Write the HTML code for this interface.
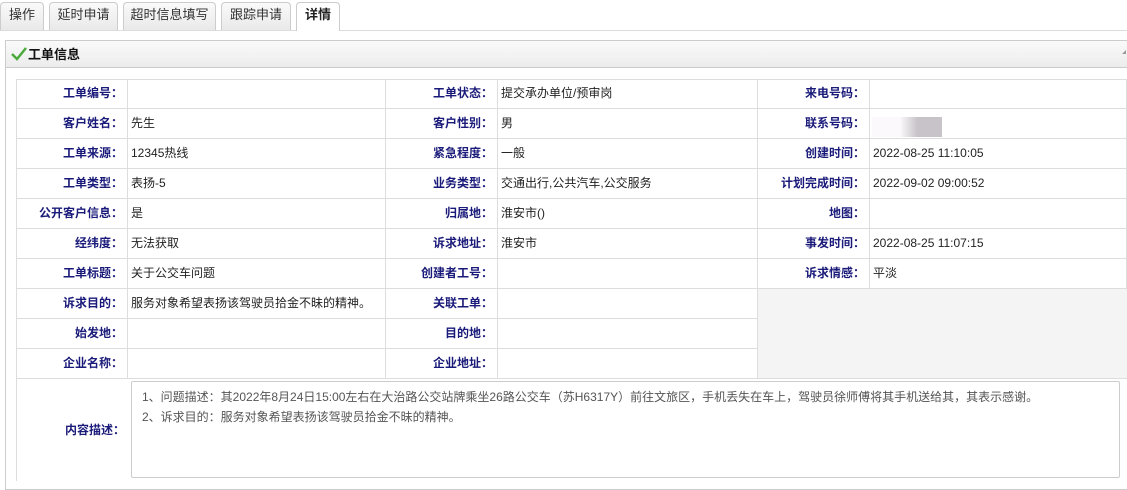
<!DOCTYPE html>
<html><head><meta charset="utf-8"><style>
*{margin:0;padding:0;box-sizing:border-box}
body{width:1127px;height:481px;overflow:hidden;background:#fff;font-family:"Liberation Sans","Noto Sans CJK SC",sans-serif;font-size:12px;color:#222;position:relative}
.tab{position:absolute;top:2px;height:28px;border:1px solid #ccc;border-bottom:none;border-radius:4px 4px 0 0;background:linear-gradient(#fafafa,#e9e9e9);text-align:center;line-height:24px;font-size:13px;color:#333}
.tab.a{background:#fff;height:29px;font-weight:bold;color:#222}
.tabline{position:absolute;left:0;top:30px;width:1127px;border-top:1px solid #ddd}
.panel{position:absolute;left:5px;top:40px;width:1130px;height:450px;border:1px solid #ccc}
.hdr{position:absolute;left:0;top:0;width:100%;height:27px;background:linear-gradient(#fafafa,#ececec);border-bottom:1px solid #ccc;font-weight:bold;font-size:13px;line-height:27px;padding-left:22px;color:#111}
.c{position:absolute;border-right:1px solid #ddd;border-bottom:1px solid #ddd;height:30px;line-height:29px;white-space:nowrap}
.l{text-align:right;color:#1a1a7a;font-weight:bold;padding-right:4px}
.v{padding-left:3px;color:#222}
</style></head><body>
<div class="tab" style="left:0;width:44px">操作</div>
<div class="tab" style="left:49px;width:69px">延时申请</div>
<div class="tab" style="left:123px;width:93px">超时信息填写</div>
<div class="tab" style="left:221px;width:70px">跟踪申请</div>
<div class="tabline"></div>
<div class="tab a" style="left:296px;width:44px">详情</div>
<div class="panel"><div class="hdr">工单信息</div>
<svg style="position:absolute;left:5px;top:6px" width="16" height="14" viewBox="0 0 16 14"><path d="M1 7 L6 12 L15 1" stroke="#4caa3c" stroke-width="2.5" fill="none"/></svg>
<div style="position:absolute;right:8px;top:9px;width:0;height:0;border-left:4px solid transparent;border-bottom:4px solid #999"></div>
</div>
<div style="position:absolute;left:16px;top:79px;width:1111px;height:402px;border-left:1px solid #ddd;border-top:1px solid #ddd"></div>
<div id="g"></div>
<div style="position:absolute;left:758px;top:289px;width:369px;height:90px;background:#f4f4f4;border-bottom:1px solid #ddd"></div>
<div class="c l" style="left:16px;top:379px;width:113px;height:102px;line-height:102px;border-right:none;border-bottom:none">内容描述：</div>
<div style="position:absolute;left:131px;top:381px;width:989px;height:97px;border:1px solid #ccc;border-radius:2px;padding:5px 0 0 10px;color:#555;line-height:20px;font-size:12px">1、问题描述：其2022年8月24日15:00左右在大治路公交站牌乘坐26路公交车（苏H6317Y）前往文旅区，手机丢失在车上，驾驶员徐师傅将其手机送给其，其表示感谢。<br>2、诉求目的：服务对象希望表扬该驾驶员拾金不昧的精神。</div>
<div style="position:absolute;left:872px;top:117px;width:70px;height:20px;background:linear-gradient(90deg,#fbf9fb 0,#fbf9fb 40%,#c8c3c8 65%,#c8c3c8 100%)"></div>
<script>
var rows=[["工单编号：","","工单状态：","提交承办单位/预审岗","来电号码：",""],
["客户姓名：","先生","客户性别：","男","联系号码：",""],
["工单来源：","12345热线","紧急程度：","一般","创建时间：","2022-08-25 11:10:05"],
["工单类型：","表扬-5","业务类型：","交通出行,公共汽车,公交服务","计划完成时间：","2022-09-02 09:00:52"],
["公开客户信息：","是","归属地：","淮安市()","地图：",""],
["经纬度：","无法获取","诉求地址：","淮安市","事发时间：","2022-08-25 11:07:15"],
["工单标题：","关于公交车问题","创建者工号：","","诉求情感：","平淡"],
["诉求目的：","服务对象希望表扬该驾驶员拾金不昧的精神。","关联工单：",""],
["始发地：","","目的地：",""],
["企业名称：","","企业地址：",""]];
var xs=[16,128,386,498,758,870,1127],h="";
rows.forEach(function(r,i){var y=79+i*30;for(var j=0;j<r.length;j++){h+='<div class="c '+(j%2?'v':'l')+'" style="left:'+xs[j]+'px;top:'+y+'px;width:'+(xs[j+1]-xs[j])+'px">'+r[j]+'</div>';}});
document.getElementById("g").innerHTML=h;
</script>
</body></html>
